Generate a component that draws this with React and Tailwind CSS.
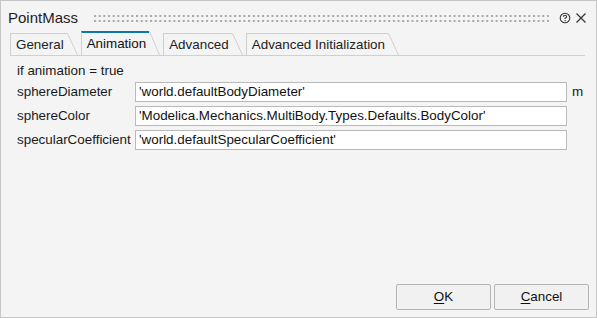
import React from 'react'

const font = { fontFamily: '"Liberation Sans", Arial, sans-serif' }

const Tab = ({ label, active }) => (
    <div className={active ? 'flex h-[24px]' : 'flex h-[22px]'}>
        <div
            className={
                active
                    ? 'flex items-center pl-[5px] pr-[3px] border-l border-[#d0d0d0] border-t-2 border-t-[#0a78ad] bg-[#f4f4f4] text-[#111]'
                    : 'flex items-center pl-[5px] pr-[3px] border-l border-t border-[#d0d0d0] text-[#222]'
            }
        >
            {label}
        </div>
        <svg width="11" className="h-full shrink-0" viewBox="0 0 11 24" preserveAspectRatio="none">
            <path d="M0 0.5 L0.5 0.5 L10.5 24" fill="none" stroke="#d0d0d0" strokeWidth="1" vectorEffect="non-scaling-stroke" />
        </svg>
    </div>
)

const Field = ({ value }) => (
    <div className="h-[20px] bg-white border border-[#b9b9b9] flex items-center pl-[3px] text-[#111] whitespace-nowrap overflow-hidden">
        {value}
    </div>
)

export default function App() {
    const rows = [
        { label: 'sphereDiameter', value: "'world.defaultBodyDiameter'", unit: 'm' },
        { label: 'sphereColor', value: "'Modelica.Mechanics.MultiBody.Types.Defaults.BodyColor'", unit: '' },
        { label: 'specularCoefficient', value: "'world.defaultSpecularCoefficient'", unit: '' },
    ]

    return (
        <div style={font} className="w-[597px] h-[318px] bg-[#f4f4f4] border border-[#c6c6c6] flex flex-col text-[13.4px] leading-[16px] text-[#1a1a1a]">
            {/* title bar */}
            <div className="flex items-center h-[29px] pl-[7px] pr-[9px] pt-[4px]">
                <span className="text-[15px] text-[#1e1e1e]">PointMass</span>
                <svg className="flex-1 h-[7px] ml-[16px] mr-[10px] mt-[1px]">
                    <defs>
                        <pattern id="grip" width="4.67" height="5" patternUnits="userSpaceOnUse">
                            <rect width="2" height="2" fill="#a8a8a8" />
                        </pattern>
                    </defs>
                    <rect width="100%" height="100%" fill="url(#grip)" />
                </svg>
                <svg width="12" height="12" viewBox="0 0 12 12" className="mr-[4px]">
                    <circle cx="6" cy="6" r="4.8" fill="none" stroke="#333" strokeWidth="1.1" />
                    <path d="M4.4 4.8 Q4.4 3.3 6 3.3 Q7.6 3.3 7.6 4.7 Q7.6 5.6 6.1 6.2 L6.1 7.1" fill="none" stroke="#333" strokeWidth="1.1" />
                    <rect x="5.5" y="8" width="1.2" height="1.2" fill="#333" />
                </svg>
                <svg width="12" height="12" viewBox="0 0 12 12">
                    <path d="M1.5 1.5 L10.5 10.5 M10.5 1.5 L1.5 10.5" stroke="#333" strokeWidth="1.2" />
                </svg>
            </div>

            {/* tabs */}
            <div className="flex items-end gap-[3px] ml-[9px] mr-[11px] border-b border-[#d0d0d0] mt-[1px]">
                <Tab label="General" />
                <Tab label="Animation" active />
                <Tab label="Advanced" />
                <Tab label="Advanced Initialization" />
            </div>

            {/* content */}
            <div className="pl-[16px] pt-[7px]">
                <div className="mb-[3px]">if animation = true</div>
                <div className="grid grid-cols-[114px_432px_auto] gap-x-[4px] gap-y-[4px] items-center">
                    {rows.map((r) => (
                        <React.Fragment key={r.label}>
                            <span className="whitespace-nowrap">{r.label}</span>
                            <Field value={r.value} />
                            <span className="pl-[1px]">{r.unit}</span>
                        </React.Fragment>
                    ))}
                </div>
            </div>

            <div className="flex-1" />

            {/* buttons */}
            <div className="flex justify-end gap-[3px] pr-[7px] pb-[7px]">
                <button className="w-[95px] h-[26px] bg-[#f1f1f1] border border-[#b4b4b4] rounded-[2px] text-[#111]">
                    <span className="underline underline-offset-2">O</span>K
                </button>
                <button className="w-[95px] h-[26px] bg-[#f1f1f1] border border-[#b4b4b4] rounded-[2px] text-[#111]">
                    <span className="underline underline-offset-2">C</span>ancel
                </button>
            </div>
        </div>
    )
}
